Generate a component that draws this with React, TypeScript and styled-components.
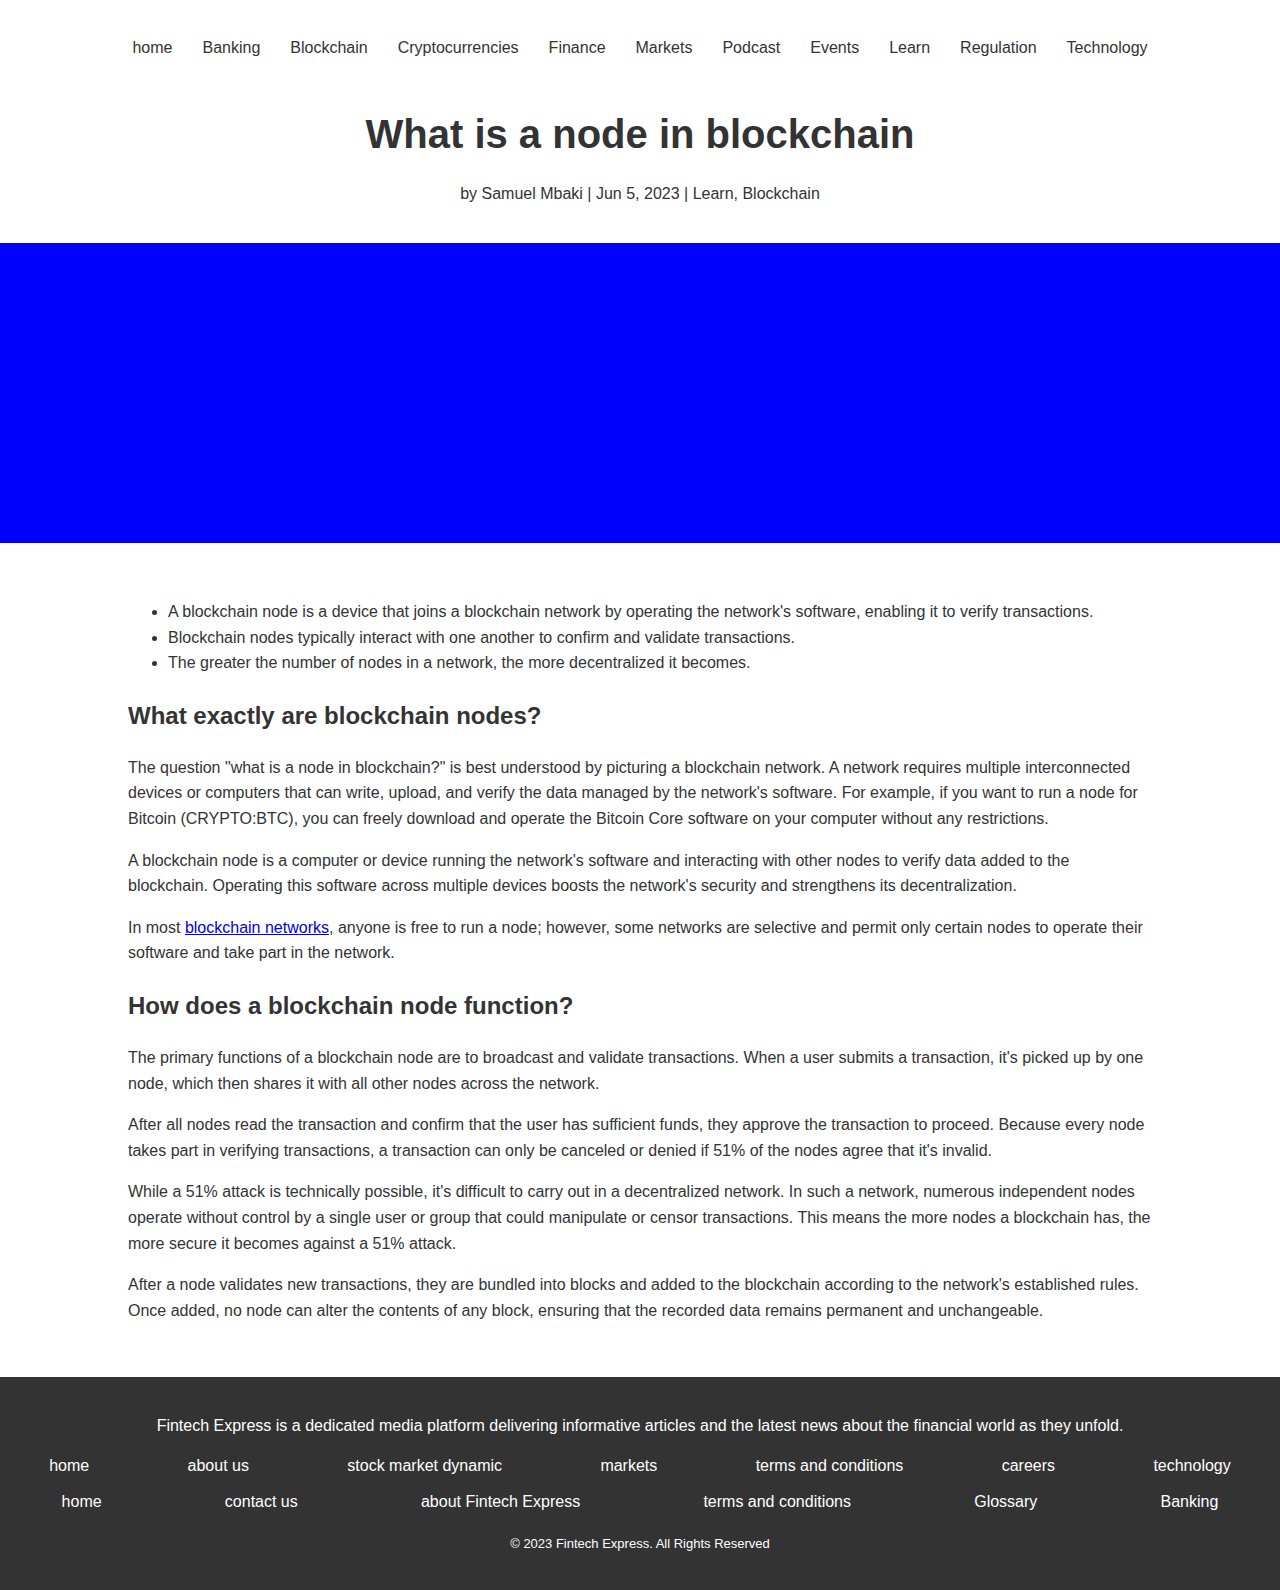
import React from "react";
import styled, { createGlobalStyle } from "styled-components";

const GlobalStyle = createGlobalStyle`
  html, body {
    margin: 0;
    padding: 0;
    background: #ffffff;
  }
  body {
    font-family: "Liberation Sans", Arial, Helvetica, sans-serif;
    color: #333333;
    font-size: 16px;
    overflow-x: hidden;
  }
  * { box-sizing: border-box; }
`;

const Header = styled.header`
  padding: 36px 20px 37px;
  text-align: center;
`;

const Nav = styled.nav`
  display: flex;
  justify-content: center;
  flex-wrap: wrap;
`;

const NavLink = styled.a`
  display: block;
  margin: 0 15px;
  font-size: 16px;
  line-height: 24px;
  color: #333333;
  text-decoration: none;
`;

const Title = styled.h1`
  margin: 50px 0 0;
  font-size: 40px;
  line-height: 48px;
  font-weight: 700;
  color: #333333;
`;

const Meta = styled.p`
  margin: 24px 0 0;
  font-size: 16px;
  line-height: 24px;
`;

const Banner = styled.div`
  height: 300px;
  background: #0000ff;
`;

const Article = styled.main`
  max-width: 1024px;
  margin: 0 auto;
  padding: 40px 0 38px;
  font-size: 16px;
  line-height: 1.6;
`;

const List = styled.ul`
  margin: 16px 0;
  padding-left: 40px;
`;

const Heading = styled.h2`
  margin: 25px 0 24px;
  font-size: 24px;
  line-height: 30px;
  font-weight: 700;
  color: #333333;
`;

const Paragraph = styled.p`
  margin: 16px 0;
`;

const InlineLink = styled.a`
  color: #0000ee;
  text-decoration: underline;
`;

const Footer = styled.footer`
  background: #333333;
  color: #ffffff;
  padding: 37px 0 36px;
  text-align: center;
  overflow: hidden;
`;

const FooterText = styled.p`
  margin: 0 0 16px;
  font-size: 16px;
  line-height: 24px;
`;

const FooterRow = styled.div<{ $spaced?: boolean }>`
  display: flex;
  flex-wrap: nowrap;
  justify-content: space-around;
  margin-top: ${(p) => (p.$spaced ? "12px" : "0")};
`;

const FooterLink = styled.a`
  display: block;
  font-size: 16px;
  line-height: 24px;
  color: #ffffff;
  text-decoration: none;
  white-space: nowrap;
`;

const Copyright = styled.p`
  margin: 20px 0 0;
  font-size: 13px;
  line-height: 20px;
`;

const navItems = [
  "home",
  "Banking",
  "Blockchain",
  "Cryptocurrencies",
  "Finance",
  "Markets",
  "Podcast",
  "Events",
  "Learn",
  "Regulation",
  "Technology",
];

const footerRow1 = [
  "home",
  "about us",
  "stock market dynamic",
  "markets",
  "terms and conditions",
  "careers",
  "technology",
];

const footerRow2 = [
  "home",
  "contact us",
  "about Fintech Express",
  "terms and conditions",
  "Glossary",
  "Banking",
];

export default function App() {
  return (
    <>
      <GlobalStyle />
      <Header>
        <Nav>
          {navItems.map((n) => (
            <NavLink key={n} href="#">
              {n}
            </NavLink>
          ))}
        </Nav>
        <Title>What is a node in blockchain</Title>
        <Meta>by Samuel Mbaki | Jun 5, 2023 | Learn, Blockchain</Meta>
      </Header>
      <Banner />
      <Article>
        <List>
          <li>
            A blockchain node is a device that joins a blockchain network by operating the network's
            software, enabling it to verify transactions.
          </li>
          <li>Blockchain nodes typically interact with one another to confirm and validate transactions.</li>
          <li>The greater the number of nodes in a network, the more decentralized it becomes.</li>
        </List>
        <Heading>What exactly are blockchain nodes?</Heading>
        <Paragraph>
          The question "what is a node in blockchain?" is best understood by picturing a blockchain
          network. A network requires multiple interconnected devices or computers that can write,
          upload, and verify the data managed by the network's software. For example, if you want to
          run a node for Bitcoin (CRYPTO:BTC), you can freely download and operate the Bitcoin Core
          software on your computer without any restrictions.
        </Paragraph>
        <Paragraph>
          A blockchain node is a computer or device running the network's software and interacting with
          other nodes to verify data added to the blockchain. Operating this software across multiple
          devices boosts the network's security and strengthens its decentralization.
        </Paragraph>
        <Paragraph>
          In most <InlineLink href="#">blockchain networks</InlineLink>, anyone is free to run a node;
          however, some networks are selective and permit only certain nodes to operate their software
          and take part in the network.
        </Paragraph>
        <Heading>How does a blockchain node function?</Heading>
        <Paragraph>
          The primary functions of a blockchain node are to broadcast and validate transactions. When a
          user submits a transaction, it's picked up by one node, which then shares it with all other
          nodes across the network.
        </Paragraph>
        <Paragraph>
          After all nodes read the transaction and confirm that the user has sufficient funds, they
          approve the transaction to proceed. Because every node takes part in verifying transactions, a
          transaction can only be canceled or denied if 51% of the nodes agree that it's invalid.
        </Paragraph>
        <Paragraph>
          While a 51% attack is technically possible, it's difficult to carry out in a decentralized
          network. In such a network, numerous independent nodes operate without control by a single
          user or group that could manipulate or censor transactions. This means the more nodes a
          blockchain has, the more secure it becomes against a 51% attack.
        </Paragraph>
        <Paragraph>
          After a node validates new transactions, they are bundled into blocks and added to the
          blockchain according to the network's established rules. Once added, no node can alter the
          contents of any block, ensuring that the recorded data remains permanent and unchangeable.
        </Paragraph>
      </Article>
      <Footer>
        <FooterText>
          Fintech Express is a dedicated media platform delivering informative articles and the latest
          news about the financial world as they unfold.
        </FooterText>
        <FooterRow>
          {footerRow1.map((l) => (
            <FooterLink key={l} href="#">
              {l}
            </FooterLink>
          ))}
        </FooterRow>
        <FooterRow $spaced>
          {footerRow2.map((l, i) => (
            <FooterLink key={l + i} href="#">
              {l}
            </FooterLink>
          ))}
        </FooterRow>
        <Copyright>© 2023 Fintech Express. All Rights Reserved</Copyright>
      </Footer>
    </>
  );
}
